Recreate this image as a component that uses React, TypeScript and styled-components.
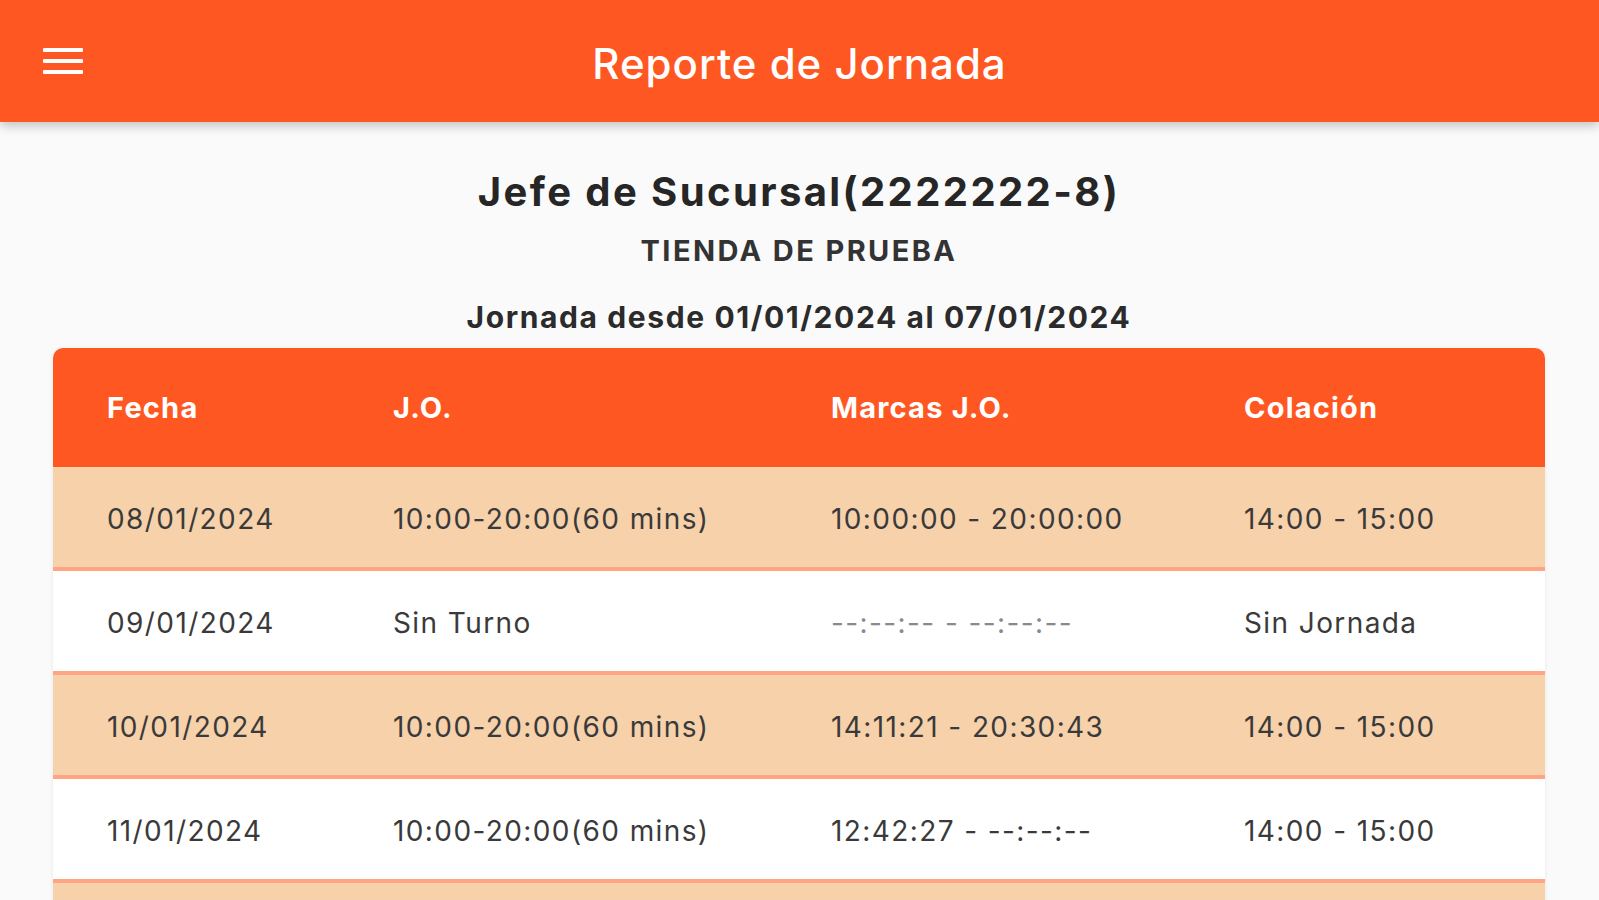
import styled, { createGlobalStyle } from 'styled-components';

const GlobalStyle = createGlobalStyle`
  html, body {
    margin: 0;
    padding: 0;
    background: #fafafa;
    font-family: Inter, 'Noto Sans', Roboto, sans-serif;
  }
  #root {
    min-height: 100vh;
  }
`;

interface Jornada {
  fecha: string;
  jo: string;
  marcas: string;
  colacion: string;
}

interface RowProps {
  $striped: boolean;
}

interface CellProps {
  $muted?: boolean;
}

const rows: Jornada[] = [
  { fecha: '08/01/2024', jo: '10:00-20:00(60 mins)', marcas: '10:00:00 - 20:00:00', colacion: '14:00 - 15:00' },
  { fecha: '09/01/2024', jo: 'Sin Turno', marcas: '--:--:-- - --:--:--', colacion: 'Sin Jornada' },
  { fecha: '10/01/2024', jo: '10:00-20:00(60 mins)', marcas: '14:11:21 - 20:30:43', colacion: '14:00 - 15:00' },
  { fecha: '11/01/2024', jo: '10:00-20:00(60 mins)', marcas: '12:42:27 - --:--:--', colacion: '14:00 - 15:00' },
  { fecha: '12/01/2024', jo: '10:00-20:00(60 mins)', marcas: '10:02:11 - 20:01:05', colacion: '14:00 - 15:00' },
];

const Page = styled.div`
  display: flex;
  flex-direction: column;
  height: 100vh;
  overflow: hidden;
`;

const AppBar = styled.header`
  position: relative;
  z-index: 2;
  flex: none;
  height: 122px;
  display: grid;
  grid-template-columns: 40px 1fr 40px;
  align-items: center;
  padding: 0 43px;
  background: #ff5722;
  box-shadow: 0 4px 10px rgba(0, 0, 0, 0.22);
`;

const MenuButton = styled.button`
  display: flex;
  align-items: center;
  justify-content: center;
  width: 40px;
  height: 40px;
  padding: 0;
  border: none;
  background: none;
  cursor: pointer;
`;

const AppTitle = styled.h1`
  margin: 4px 0 0;
  text-align: center;
  font-size: 42px;
  font-weight: 500;
  color: #ffffff;
  letter-spacing: 1px;
`;

const Content = styled.main`
  display: flex;
  flex-direction: column;
  align-items: center;
  padding: 46px 54px 0 53px;
`;

const Title = styled.h2`
  margin: 0;
  font-size: 40px;
  line-height: 48px;
  font-weight: 700;
  color: #262626;
  letter-spacing: 2.4px;
`;

const Store = styled.div`
  margin-top: 18px;
  font-size: 29px;
  line-height: 34px;
  font-weight: 700;
  color: #333333;
  letter-spacing: 2.4px;
`;

const Period = styled.div`
  margin-top: 31px;
  font-size: 30px;
  line-height: 36px;
  font-weight: 700;
  color: #2b2b2b;
  letter-spacing: 1.6px;
`;

const Table = styled.div`
  width: 100%;
  margin-top: 13px;
  border-radius: 10px 10px 0 0;
  overflow: hidden;
  box-shadow: 0 1px 4px rgba(0, 0, 0, 0.08);
`;

const HeadRow = styled.div`
  display: grid;
  grid-template-columns: 286px 438px 413px 1fr;
  align-items: center;
  height: 119px;
  padding-left: 54px;
  background: #ff5722;
`;

const HeadCell = styled.div`
  font-size: 29px;
  font-weight: 700;
  color: #ffffff;
  letter-spacing: 1.2px;
`;

const BodyRow = styled.div<RowProps>`
  display: grid;
  grid-template-columns: 286px 438px 413px 1fr;
  align-items: center;
  height: 104px;
  padding: 4px 0 0 54px;
  box-sizing: border-box;
  background: ${(p) => (p.$striped ? '#f6d1aa' : '#ffffff')};
  border-bottom: 4px solid #ffa484;
`;

const Cell = styled.div<CellProps>`
  font-size: 28px;
  font-weight: 400;
  color: ${(p) => (p.$muted ? '#8a8a8a' : '#3a3a3a')};
  letter-spacing: 1.4px;
  white-space: nowrap;
`;

function MenuIcon() {
  return (
    <svg width="40" height="30" viewBox="0 0 40 30">
      <rect x="0" y="2" width="40" height="4" rx="1" fill="#ffffff" />
      <rect x="0" y="13" width="40" height="4" rx="1" fill="#ffffff" />
      <rect x="0" y="24" width="40" height="4" rx="1" fill="#ffffff" />
    </svg>
  );
}

export default function App() {
  return (
    <>
      <GlobalStyle />
      <Page>
        <AppBar>
          <MenuButton aria-label="Menú">
            <MenuIcon />
          </MenuButton>
          <AppTitle>Reporte de Jornada</AppTitle>
        </AppBar>

        <Content>
          <Title>Jefe de Sucursal(2222222-8)</Title>
          <Store>TIENDA DE PRUEBA</Store>
          <Period>Jornada desde 01/01/2024 al 07/01/2024</Period>

          <Table>
            <HeadRow>
              <HeadCell>Fecha</HeadCell>
              <HeadCell>J.O.</HeadCell>
              <HeadCell>Marcas J.O.</HeadCell>
              <HeadCell>Colación</HeadCell>
            </HeadRow>
            {rows.map((r, i) => (
              <BodyRow key={r.fecha} $striped={i % 2 === 0}>
                <Cell>{r.fecha}</Cell>
                <Cell>{r.jo}</Cell>
                <Cell $muted={r.marcas.startsWith('--')}>{r.marcas}</Cell>
                <Cell>{r.colacion}</Cell>
              </BodyRow>
            ))}
          </Table>
        </Content>
      </Page>
    </>
  );
}
